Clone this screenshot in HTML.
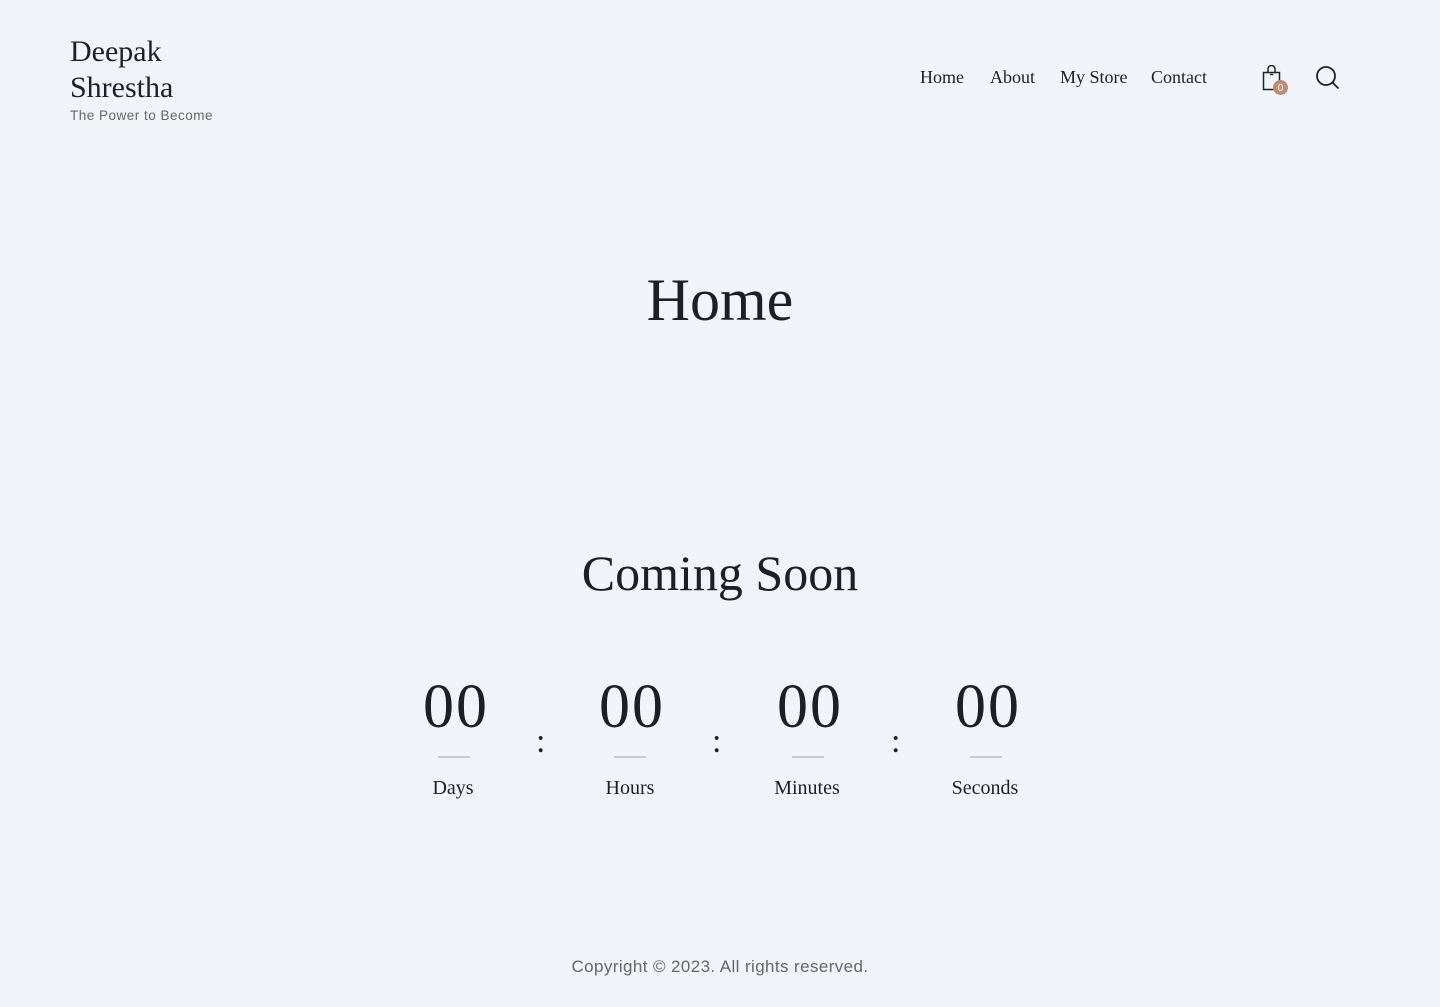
<!DOCTYPE html>
<html><head><meta charset="utf-8"><style>
*{margin:0;padding:0;box-sizing:border-box}
body{width:1440px;height:1007px;background:#f1f5f9;font-family:"Liberation Serif",serif;color:#1e1f22;position:relative;overflow:hidden}
.a{position:absolute}
.logo{left:70px;top:34px;font-size:30px;line-height:36px}
.tag{left:70px;top:108px;font-family:"Liberation Sans",sans-serif;font-size:13.5px;color:#666;letter-spacing:0.5px}
.nav{top:67px;font-size:18px}
.c{text-align:center}
.num{font-size:62px;top:672px;width:160px;line-height:70px;letter-spacing:2px}
.line{width:32px;height:2px;background:#c9cbcf;top:756px}
.lab{font-size:20px;top:777px;width:160px}
.colon{font-size:34px;top:723px}
</style></head><body>
<div class="a logo">Deepak<br>Shrestha</div>
<div class="a tag">The Power to Become</div>
<div class="a nav" style="left:920px">Home</div>
<div class="a nav" style="left:990px">About</div>
<div class="a nav" style="left:1060px">My Store</div>
<div class="a nav" style="left:1151px">Contact</div>
<svg class="a" style="left:1262px;top:65px" width="30" height="30" viewBox="0 0 30 30"><path d="M1.5 7.5h16v17h-16z" fill="none" stroke="#222" stroke-width="1.5"/><path d="M6 7.5V4a3.5 3.5 0 0 1 7 0v3.5" fill="none" stroke="#222" stroke-width="1.5"/><path d="M8 9.5h3" stroke="#222" stroke-width="1.5"/><circle cx="18.5" cy="22.5" r="7.5" fill="#c08c71"/><text x="18.5" y="26" font-size="10" fill="#fff" text-anchor="middle" font-family="Liberation Sans">0</text></svg>
<svg class="a" style="left:1315px;top:65px" width="26" height="26" viewBox="0 0 26 26"><circle cx="11" cy="11" r="9" fill="none" stroke="#222" stroke-width="1.8"/><path d="M17.5 17.5l6 6" stroke="#222" stroke-width="1.8"/></svg>
<div class="a c" style="left:0;width:1440px;top:266px;font-size:60px">Home</div>
<div class="a c" style="left:0;width:1440px;top:544px;font-size:50px">Coming Soon</div>
<div class="a c num" style="left:376px">00</div>
<div class="a c num" style="left:552px">00</div>
<div class="a c num" style="left:730px">00</div>
<div class="a c num" style="left:908px">00</div>
<div class="a colon" style="left:536px">:</div>
<div class="a colon" style="left:712px">:</div>
<div class="a colon" style="left:891px">:</div>
<div class="a line" style="left:438px"></div>
<div class="a line" style="left:614px"></div>
<div class="a line" style="left:792px"></div>
<div class="a line" style="left:970px"></div>
<div class="a c lab" style="left:373px">Days</div>
<div class="a c lab" style="left:550px">Hours</div>
<div class="a c lab" style="left:727px">Minutes</div>
<div class="a c lab" style="left:905px">Seconds</div>
<div class="a c" style="left:0;width:1440px;top:957px;font-family:'Liberation Sans',sans-serif;font-size:17px;color:#666;letter-spacing:0.4px">Copyright © 2023. All rights reserved.</div>
</body></html>
